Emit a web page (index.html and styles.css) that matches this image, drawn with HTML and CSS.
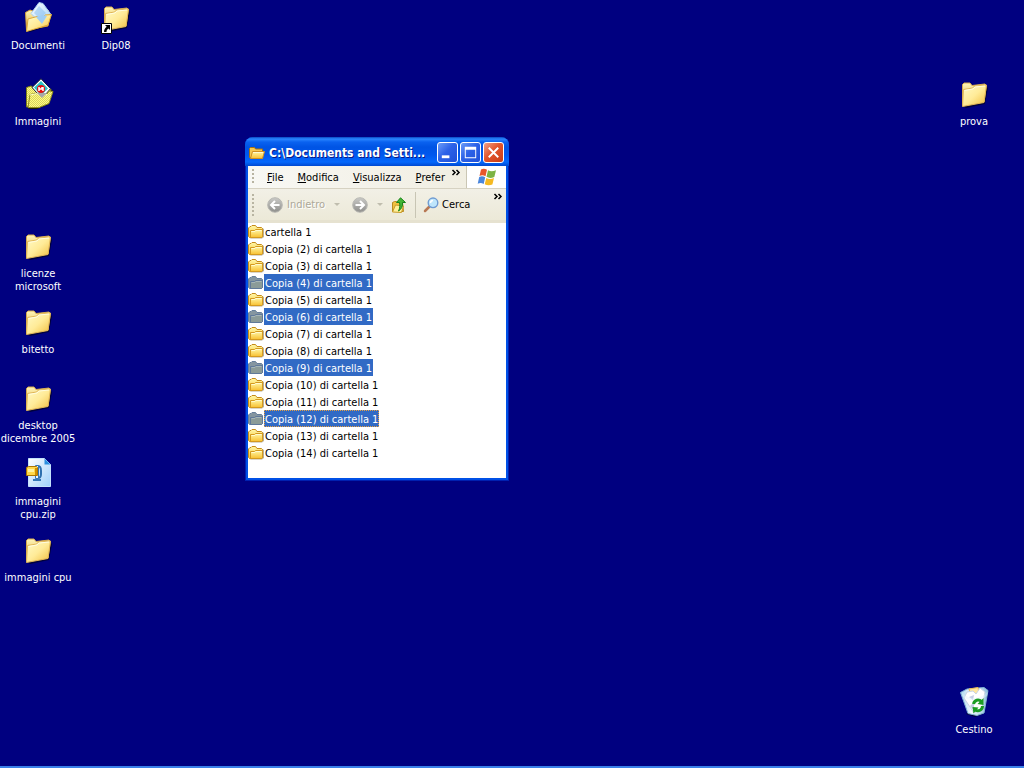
FILE: index.html
```html
<!DOCTYPE html>
<html lang="it">
<head>
<meta charset="utf-8">
<title>Desktop</title>
<link rel="stylesheet" href="styles.css">
</head>
<body>
<svg class="sprites" aria-hidden="true">
  <defs>
    <linearGradient id="gold" x1="0" y1="0" x2="1" y2="1"><stop offset="0" stop-color="#fffbc8"/><stop offset=".5" stop-color="#ffeb98"/><stop offset="1" stop-color="#f0bd3c"/></linearGradient>
    <linearGradient id="goldback" x1="0" y1="0" x2="0" y2="1"><stop offset="0" stop-color="#fff6b8"/><stop offset="1" stop-color="#dca83a"/></linearGradient>
    <linearGradient id="small" x1="0" y1="0" x2="0" y2="1"><stop offset="0" stop-color="#fff8a8"/><stop offset="1" stop-color="#f8c030"/></linearGradient>
    <linearGradient id="paper" x1="0" y1="0" x2="1" y2="1"><stop offset="0" stop-color="#ffffff"/><stop offset="1" stop-color="#9fd0fa"/></linearGradient>
    <linearGradient id="grey" x1="0" y1="0" x2="0" y2="1"><stop offset="0" stop-color="#c9c9c6"/><stop offset="1" stop-color="#8e8e8b"/></linearGradient>
    <linearGradient id="bin" x1="0" y1="0" x2="1" y2="0"><stop offset="0" stop-color="#a9d5ee"/><stop offset=".4" stop-color="#f4fbff"/><stop offset="1" stop-color="#8cbfdc"/></linearGradient>
    <pattern id="dither" width="2" height="2" patternUnits="userSpaceOnUse"><path fill="#ffff80" d="M0 0h2v2H0z"/><path fill="#d8d060" d="M0 0h1v1H0zM1 1h1v1H1z"/></pattern>
  </defs>
  <symbol id="folder" viewBox="0 0 32 32">
    <path fill="#00003c" d="M6 29l2 1 19-4 3-16-2-2z"/>
    <path fill="url(#goldback)" stroke="#d6aa4c" d="M4.500 27V6.500L6 5h6l2 2.500 13-1.500 1 1v3L26 24z"/>
    <path fill="url(#gold)" stroke="#e0b658" d="M4.500 28.500l1-17 9-1.500 2-2 12-1-2.500 17.500z"/>
    <path fill="none" stroke="#fffde0" d="M6.500 12.500l8.500-1.500 2-2 10-1"/>
  </symbol>
  <symbol id="documents" viewBox="0 0 32 32">
    <path fill="#00003c" d="M5 29l3 1 18-6 4-11z"/>
    <path fill="url(#goldback)" stroke="#d6a13a" d="M4.500 28L3.500 10.500 8 8l3 1 15-1 2 5-2 11z"/>
    <path fill="url(#paper)" stroke="#a8cdf0" d="M17 .5l4 1 8 11-9 10-11-11z"/>
    <path fill="#79b5ee" d="M17 4l7 7-6 6-6-6z" opacity=".45"/>
    <path fill="url(#gold)" stroke="#dda93a" d="M4.500 29.500L6 17l9-2.500 4 3 4-4.500 6.500-.5L26 23z"/>
    <path fill="#a0cdf4" d="M14 15l6 7 5-8-4-1z"/>
  </symbol>
  <symbol id="pictures" viewBox="0 0 32 32">
    <path fill="#202000" d="M6 30l1 1h8l12-5 4-13-3-2z"/>
    <path fill="url(#dither)" stroke="#808018" d="M4.500 29V9.500L9 8l3 2 17 1-3 14z"/>
    <path fill="#fff" stroke="#101830" d="M19 .7l9.500 10L20 20.500 10 9.500z"/>
    <path fill="#28c4c8" d="M19 3l7 7.500-7 7-7-8z"/>
    <circle cx="19" cy="11" r="4" fill="#e81010"/>
    <path fill="none" stroke="#fff" stroke-width="1.500" d="M17 9v4M17 11h3v-2M21 9v4"/>
    <path fill="url(#dither)" stroke="#909020" d="M6 29.500l2-13 7-1.500 4 2 6-1 2-3 4 .5-4 12-10 4z"/>
    <path fill="none" stroke="#ffffc8" d="M8 17l7-1.500 4 2 6-1"/>
    <path fill="#a8a8a8" d="M15 15h10l-5 5z"/>
  </symbol>
  <symbol id="shortcut" viewBox="0 0 32 32">
    <use href="#folder"/>
    <path fill="#fff" stroke="#000" d="M1.500 21.500h10v10h-10z"/>
    <path fill="#000" d="M5 23h5v5l-1.500-1.500C7 27.500 6.500 28.500 6.500 30H4c0-2.500 1-4 2.700-5.300z"/>
  </symbol>
  <symbol id="zip" viewBox="0 0 32 32">
    <path fill="url(#paper)" stroke="#c4e2fc" d="M6.500.5h16l6 6v22h-22z"/>
    <path fill="#2b8fe0" d="M22.500.5l6 6h-6z"/>
    <path fill="none" stroke="#2d6fae" stroke-width="2" d="M14 8h2c3 0 3 3 3 5v3c0 3-1 4-3 4h-2"/>
    <path fill="#eaf5ff" stroke="#3477b8" d="M13.500 7.500h3v13h-3z"/>
    <path stroke="#3477b8" stroke-width="2" d="M11 22h8"/>
    <path fill="#ffd84a" stroke="#ad7600" d="M4.500 9.500l2-1h8l1 1v8h-11z"/>
    <path fill="#fff4a0" d="M6 11h6v3H6z"/>
    <path fill="#d09000" d="M13 10h2v7h-2z"/>
  </symbol>
  <symbol id="trash" viewBox="0 0 32 32">
    <path fill="#00003c" d="M8 28l9 3 8-3 5-20z"/>
    <path fill="url(#bin)" stroke="#7fb0d4" d="M2.500 6.500L9 3l17-1.500 4 3-4 22.500-7 2.500-9-2z"/>
    <path fill="#ffe6a0" stroke="#e8b850" d="M11 3l9-1.500 1 6-8 3z"/>
    <path fill="#fff" stroke="#c8d4e4" d="M9 6l6-1 3 3 4-6 5 4-3 16-8 5-6-9-4-6z"/>
    <path fill="#c5cde6" d="M11 11l5-2-1 5zM12 20l4-4v9z"/>
    <path fill="#e2f2fb" d="M4 7c4 4 9 5 12 5 6 0 11-3 14-7l-1 5c-7 5-18 6-24 1z" opacity=".4"/>
    <path fill="none" stroke="#1b9c24" stroke-width="3" d="M15.500 18c1-4 5-5 8-2.500M24.500 20c0 4-4 6-7.500 4"/>
    <path fill="#1b9c24" d="M25.500 12v7l-6-1zM14.500 21l6 .5-5 6z"/>
  </symbol>
  <symbol id="dir" viewBox="0 0 16 16">
    <path fill="#8a7a50" d="M2 14.500h12l2-1.500V5l-2-1z" opacity=".6"/>
    <path fill="url(#small)" stroke="#c58a18" d="M.5 12.500V4L2 2.500h1l1-1h3.500l1.500 2h4.500l1 1v8l-1 1h-12z"/>
    <path fill="url(#small)" stroke="#d49a20" d="M2.500 13.500v-7h4l1-1h7v7l-1 1z"/>
    <path fill="none" stroke="#fffbd0" d="M3.500 7.500H7l1-1h5.500"/>
  </symbol>
  <symbol id="dir-selected" viewBox="0 0 16 16">
    <path fill="#8596a0" stroke="#667f9c" d="M.5 12.500V4L2 2.500h1l1-1h3.500l1.500 2h4.500l1 1v8l-1 1h-12z"/>
    <path fill="#8b9b98" stroke="#60799a" d="M2.500 13.500v-7h4l1-1h7v7l-1 1z"/>
    <path fill="none" stroke="#a5b5b8" d="M3.500 7.500H7l1-1h5.500"/>
  </symbol>
  <symbol id="dir-open" viewBox="0 0 16 16">
    <path fill="#f6c850" stroke="#a87010" d="M.5 12.500v-9l1-1h4l1 1.500h7v8z"/>
    <path fill="url(#small)" stroke="#d09020" d="M1.500 13.500l2-7h12l-2 7z"/>
    <path fill="none" stroke="#fffbd0" d="M4 7.500h10"/>
  </symbol>
  <symbol id="back" viewBox="0 0 16 16">
    <circle cx="8" cy="8" r="7.300" fill="url(#grey)" stroke="#b8b8b3"/>
    <path fill="none" stroke="#fff" stroke-width="2" d="M12.500 8H5M8 4L4 8l4 4"/>
  </symbol>
  <symbol id="more" viewBox="0 0 10 8"><path fill="none" stroke="#000" stroke-width="1.500" d="M1.500 1L4 3.500 1.500 6M5.500 1L8 3.500 5.500 6"/></symbol>
</svg>

<main class="desktop">
  <a class="item documenti" href="#"><svg class="pic"><use href="#documents"/></svg><span>Documenti</span></a>
  <a class="item dip" href="#"><svg class="pic"><use href="#shortcut"/></svg><span>Dip08</span></a>
  <a class="item immagini" href="#"><svg class="pic"><use href="#pictures"/></svg><span>Immagini</span></a>
  <a class="item prova" href="#"><svg class="pic"><use href="#folder"/></svg><span>prova</span></a>
  <a class="item licenze" href="#"><svg class="pic"><use href="#folder"/></svg><span>licenze<br>microsoft</span></a>
  <a class="item bitetto" href="#"><svg class="pic"><use href="#folder"/></svg><span>bitetto</span></a>
  <a class="item dicembre" href="#"><svg class="pic"><use href="#folder"/></svg><span>desktop<br>dicembre 2005</span></a>
  <a class="item archivio" href="#"><svg class="pic"><use href="#zip"/></svg><span>immagini<br>cpu.zip</span></a>
  <a class="item cpu" href="#"><svg class="pic"><use href="#folder"/></svg><span>immagini cpu</span></a>
  <a class="item cestino" href="#"><svg class="pic"><use href="#trash"/></svg><span>Cestino</span></a>
</main>
<footer class="taskbar"></footer>

<section class="window" aria-label="Esplora cartelle">
  <header class="titlebar">
    <svg class="glyph"><use href="#dir-open"/></svg>
    <h1 class="title">C:\Documents and Setti...</h1>
    <button class="control" aria-label="Riduci a icona"><svg viewBox="0 0 20 20"><path fill="#fff" d="M4 13h8v3H4z"/></svg></button>
    <button class="control" aria-label="Ingrandisci"><svg viewBox="0 0 20 20"><path fill="#fff" fill-rule="evenodd" d="M4 4h12v12H4zM5 7v8h10V7z"/></svg></button>
    <button class="control close" aria-label="Chiudi"><svg viewBox="0 0 20 20"><path stroke="#fff" stroke-width="2" d="M5 5l10 10M15 5L5 15"/></svg></button>
  </header>
  <div class="client">
    <nav class="menubar">
      <span class="grip"></span>
      <div class="menus">
        <button class="menu"><u>F</u>ile</button><button class="menu"><u>M</u>odifica</button><button class="menu"><u>V</u>isualizza</button><button class="menu"><u>P</u>refer</button>
      </div>
      <button class="overflow" aria-label="Altri menu"><svg><use href="#more"/></svg></button>
      <div class="brand"><svg viewBox="0 0 20 18">
        <path fill="#e8562a" d="M4 1.500C6 .3 8 .5 10 1.800L8.500 8.300C6.500 7 4.500 7 2.500 8z"/>
        <path fill="#7cb342" d="M11 2.300c2.500 1.500 5 1.200 8 0L17.300 9c-3 1.200-5.500 1.200-7.800-.2z"/>
        <path fill="#4a86dc" d="M2.200 9c2-1 4-1 6 .3L6.700 16c-2-1.300-4-1.300-6-.3z"/>
        <path fill="#f5b921" d="M9.300 10c2.300 1.300 4.800 1.300 7.700 0l-1.600 6.500c-3 1.200-5.300 1-7.700-.3z"/>
      </svg></div>
    </nav>
    <div class="toolbar" role="toolbar">
      <span class="grip"></span>
      <button class="tool back" disabled><svg class="glyph"><use href="#back"/></svg>Indietro<i class="caret"></i></button>
      <button class="tool forward" disabled aria-label="Avanti"><svg class="glyph flip"><use href="#back"/></svg><i class="caret"></i></button>
      <button class="tool up" aria-label="Cartella superiore"><svg class="glyph" viewBox="0 0 16 16">
        <path fill="#f0c040" stroke="#b88a20" d="M1.500 14.500v-9l2-1h2l1 1h5l1 9z"/><path fill="#fff09a" stroke="#c89a28" d="M1.500 15l3-7 8 1-2 6.500z"/><path fill="#44b636" stroke="#17831a" d="M9.500.8l5 4.700h-3c.3 4-1 6.500-4 8.500C9 11 9 8.500 8.500 5.500h-3z"/></svg></button>
      <button class="tool search"><svg class="glyph" viewBox="0 0 16 16"><path stroke="#b87854" stroke-width="2.500" stroke-linecap="round" d="M2 14l4-4"/><circle cx="10" cy="5.800" r="4.800" fill="#bfe6fc" stroke="#6f9bd2" stroke-width="1.400"/><path fill="none" stroke="#fff" stroke-width="1.500" d="M7.500 6c0-2 1-2.500 2.500-2.500"/></svg>Cerca</button>
      <button class="overflow" aria-label="Altri pulsanti"><svg><use href="#more"/></svg></button>
    </div>
    <ul class="files" role="listbox" aria-multiselectable="true" aria-label="Cartelle">
      <li class="file" role="option"><svg class="glyph"><use href="#dir"/></svg><span>cartella 1</span></li>
      <li class="file" role="option"><svg class="glyph"><use href="#dir"/></svg><span>Copia (2) di cartella 1</span></li>
      <li class="file" role="option"><svg class="glyph"><use href="#dir"/></svg><span>Copia (3) di cartella 1</span></li>
      <li class="file selected" role="option" aria-selected="true"><svg class="glyph"><use href="#dir-selected"/></svg><span>Copia (4) di cartella 1</span></li>
      <li class="file" role="option"><svg class="glyph"><use href="#dir"/></svg><span>Copia (5) di cartella 1</span></li>
      <li class="file selected" role="option" aria-selected="true"><svg class="glyph"><use href="#dir-selected"/></svg><span>Copia (6) di cartella 1</span></li>
      <li class="file" role="option"><svg class="glyph"><use href="#dir"/></svg><span>Copia (7) di cartella 1</span></li>
      <li class="file" role="option"><svg class="glyph"><use href="#dir"/></svg><span>Copia (8) di cartella 1</span></li>
      <li class="file selected" role="option" aria-selected="true"><svg class="glyph"><use href="#dir-selected"/></svg><span>Copia (9) di cartella 1</span></li>
      <li class="file" role="option"><svg class="glyph"><use href="#dir"/></svg><span>Copia (10) di cartella 1</span></li>
      <li class="file" role="option"><svg class="glyph"><use href="#dir"/></svg><span>Copia (11) di cartella 1</span></li>
      <li class="file selected focused" role="option" aria-selected="true"><svg class="glyph"><use href="#dir-selected"/></svg><span>Copia (12) di cartella 1</span></li>
      <li class="file" role="option"><svg class="glyph"><use href="#dir"/></svg><span>Copia (13) di cartella 1</span></li>
      <li class="file" role="option"><svg class="glyph"><use href="#dir"/></svg><span>Copia (14) di cartella 1</span></li>
    </ul>
  </div>
</section>
</body>
</html>
```
FILE: styles.css
```css
* { box-sizing: border-box; }

body {
  margin: 0;
  min-height: 100vh;
  display: flex;
  flex-direction: column;
  background: #000080;
  color: #000;
  font: 11px/13px Tahoma, "DejaVu Sans Condensed", "Noto Sans", sans-serif;
}

button {
  margin: 0;
  padding: 0;
  border: 0;
  background: none;
  color: inherit;
  font: inherit;
}

.sprites { position: absolute; width: 0; height: 0; }
.glyph { flex: none; width: 16px; height: 16px; }
.flip { transform: scaleX(-1); }

/* Desktop icons on a cell grid */
.desktop {
  flex: 1;
  display: grid;
  grid-template-columns: 76px 80px 1fr 100px;
  grid-auto-rows: 76px;
}

.item {
  display: flex;
  flex-direction: column;
  align-items: center;
  gap: 5px;
  padding-top: 2px;
  color: #fff;
  text-align: center;
  text-decoration: none;
  white-space: nowrap;
}

.pic { flex: none; width: 32px; height: 32px; }

.documenti { grid-area: 1 / 1; }
.dip { grid-area: 1 / 2; }
.immagini { grid-area: 2 / 1; }
.prova { grid-area: 2 / 4; }
.licenze { grid-area: 4 / 1; }
.bitetto { grid-area: 5 / 1; }
.dicembre { grid-area: 6 / 1; }
.archivio { grid-area: 7 / 1; }
.cpu { grid-area: 8 / 1; }
.cestino { grid-area: 10 / 4; }

.taskbar { height: 2px; background: #3a80e8; }

/* Explorer window */
.window {
  position: absolute;
  left: 245px;
  top: 137px;
  width: 264px;
  padding: 0 3px 3px;
  border-radius: 8px 8px 0 0;
  background: #0050e6;
  box-shadow: inset 1px 0 #0020b0, inset -1px 0 #0020b0, inset 0 -1px #0020b0;
}

.titlebar {
  display: flex;
  align-items: center;
  gap: 2px;
  height: 29px;
  margin: 0 -3px;
  padding: 2px 5px 0 4px;
  border-radius: 8px 8px 0 0;
  background: linear-gradient(#0848c0 0, #2a86ff 2px, #0a62f0 5px, #0054e4 10px, #0058ee 18px, #0468fc 25px, #0048d0 29px);
}

.titlebar .glyph { margin-right: 2px; }

.title {
  flex: 1;
  min-width: 0;
  margin: 0 6px 0 0;
  overflow: hidden;
  color: #fff;
  font: bold 12px/18px "Trebuchet MS", "DejaVu Sans Condensed", sans-serif;
  white-space: nowrap;
  text-shadow: 1px 1px #0a1883;
}

.control {
  flex: none;
  width: 21px;
  height: 21px;
  border: 1px solid #fff;
  border-radius: 3px;
  background: linear-gradient(135deg, #6c9cf8, #2c62e8 45%, #1e50d8);
}

.control svg { display: block; width: 19px; height: 19px; }
.close { background: linear-gradient(135deg, #f0a088, #e2552c 45%, #c83c14); }

.client { background: #fff; }

.menubar, .toolbar { display: flex; align-items: center; padding-left: 4px; }
.menubar { height: 23px; border-bottom: 1px solid #d6d2c2; background: linear-gradient(90deg, #f8f8f4, #efecde); }

.grip {
  flex: none;
  width: 2px;
  height: 16px;
  margin-right: 6px;
  background: repeating-linear-gradient(#b8b4a2 0 2px, transparent 2px 4px);
}

.menus { flex: 1; display: flex; min-width: 0; }
.menu { flex: none; padding: 0 7px; }
.menu:last-child { padding-right: 0; }

.overflow { flex: none; width: 10px; height: 8px; }
.overflow svg { display: block; width: 10px; height: 8px; }
.menubar .overflow { align-self: flex-start; margin: 3px 5px 0 0; }

.brand {
  display: grid;
  place-items: center;
  align-self: stretch;
  width: 40px;
  border-left: 1px solid #cac6b4;
  background: #fff;
}

.brand svg { width: 20px; height: 18px; }

.toolbar {
  height: 34px;
  border-bottom: 3px solid #e6e2d0;
  background: linear-gradient(#f2f0e6, #ece9d8);
}

.toolbar .grip { height: 22px; }
.tool { display: flex; align-items: center; flex: none; gap: 4px; height: 26px; }
.tool:disabled { color: #aca899; text-shadow: 1px 1px #fff; }
.back { margin-left: 7px; }
.forward { gap: 9px; margin-left: 12px; }
.up { margin-left: 8px; }
.search { gap: 3px; margin-left: 8px; padding-left: 7px; border-left: 1px solid #c8c5b4; }
.caret { border: 3px solid transparent; border-top-color: #c0bdae; border-bottom: 0; }
.back .caret { margin-left: 5px; }
.toolbar .overflow { align-self: flex-start; margin: 4px 3px 0 auto; }

.files { margin: 0; padding: 0 0 17px; list-style: none; }
.file { display: flex; align-items: center; height: 17px; }
.file span { padding: 2px 1px 0; line-height: 15px; }
.selected span { background: #316ac5; color: #fff; }
.focused span { outline: 1px dotted #e8a040; outline-offset: -1px; }
```
